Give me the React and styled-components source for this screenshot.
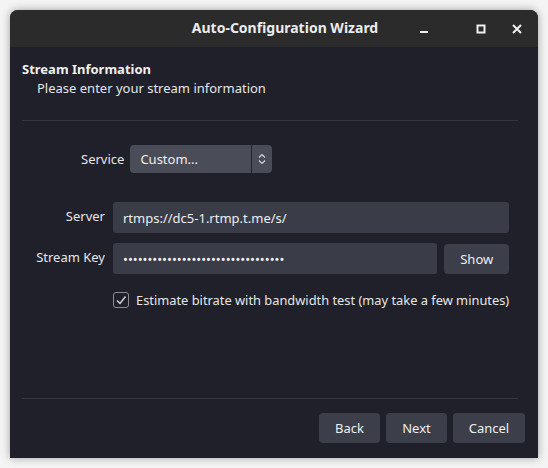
import React from "react";
import styled, { createGlobalStyle } from "styled-components";

const GlobalStyle = createGlobalStyle`
  html, body {
    margin: 0;
    padding: 0;
    background: #f4f4f4;
    font-family: "Noto Sans", "Open Sans", sans-serif;
  }
`;

const App = () => {
  return (
    <Page>
      <GlobalStyle />
      <Window>
        <TitleBar>
          <Title>Auto-Configuration Wizard</Title>
          <Controls>
            <ControlButton aria-label="minimize" $gap={45}>
              <svg width="12" height="12" viewBox="0 0 12 12">
                <rect x="2" y="8" width="8" height="2" fill="#f0f0f0" />
              </svg>
            </ControlButton>
            <ControlButton aria-label="maximize" $gap={24}>
              <svg width="12" height="12" viewBox="0 0 12 12">
                <rect x="2.5" y="2.5" width="7" height="7" fill="none" stroke="#f0f0f0" strokeWidth="2" />
              </svg>
            </ControlButton>
            <ControlButton aria-label="close" $gap={0}>
              <svg width="12" height="12" viewBox="0 0 12 12">
                <path d="M2 2 L10 10 M10 2 L2 10" stroke="#f0f0f0" strokeWidth="2" />
              </svg>
            </ControlButton>
          </Controls>
        </TitleBar>

        <Body>
          <Header>
            <HeaderTitle>Stream Information</HeaderTitle>
            <HeaderSub>Please enter your stream information</HeaderSub>
          </Header>
          <Separator />

          <ServiceRow>
            <Label>Service</Label>
            <Combo>
              <ComboText>Custom...</ComboText>
              <ComboArrow>
                <svg width="8" height="12" viewBox="0 0 8 12">
                  <path d="M1 4.5 L4 1.5 L7 4.5 M1 7.5 L4 10.5 L7 7.5" fill="none" stroke="#d8d8d8" strokeWidth="1.1" />
                </svg>
              </ComboArrow>
            </Combo>
          </ServiceRow>

          <Form>
            <FieldLabel>Server</FieldLabel>
            <Input>rtmps://dc5-1.rtmp.t.me/s/</Input>
            <FieldLabel>Stream Key</FieldLabel>
            <KeyRow>
              <Input>•••••••••••••••••••••••••••••••••</Input>
              <Button $w={65}>Show</Button>
            </KeyRow>
            <span />
            <CheckRow>
              <CheckBox>
                <svg width="12" height="12" viewBox="0 0 12 12">
                  <path d="M2 6.5 L5 9.5 L10.5 2.5" fill="none" stroke="#d8d8d8" strokeWidth="1.4" />
                </svg>
              </CheckBox>
              <CheckText>Estimate bitrate with bandwidth test (may take a few minutes)</CheckText>
            </CheckRow>
          </Form>

          <Spacer />
          <Separator />
          <Footer>
            <Button $w={61}>Back</Button>
            <Button $w={61}>Next</Button>
            <Button $w={72}>Cancel</Button>
          </Footer>
        </Body>
      </Window>
    </Page>
  );
};

const Page = styled.div`
  width: 548px;
  height: 468px;
  padding: 10px;
  box-sizing: border-box;
`;

const Window = styled.div`
  width: 528px;
  height: 448px;
  border-radius: 8px 8px 0 0;
  overflow: hidden;
  display: flex;
  flex-direction: column;
  box-shadow: 0 0 8px rgba(0, 0, 0, 0.35);
  background: #1f2029;
`;

const TitleBar = styled.div`
  height: 37px;
  background: #2b2b2b;
  display: flex;
  align-items: center;
  justify-content: center;
  position: relative;
  flex-shrink: 0;
`;

const Title = styled.div`
  color: #ececec;
  font-weight: 700;
  font-size: 14px;
  margin-left: 22px;
  margin-top: -2px;
`;

const Controls = styled.div`
  position: absolute;
  right: 15px;
  top: 13px;
  display: flex;
`;

const ControlButton = styled.div`
  width: 12px;
  height: 12px;
  display: flex;
  margin-right: ${(p) => p.$gap}px;
`;

const Body = styled.div`
  flex: 1;
  display: flex;
  flex-direction: column;
  padding: 0 12px;
`;

const Header = styled.div`
  padding: 13px 0 23px 0;
  display: flex;
  flex-direction: column;
  gap: 1px;
`;

const HeaderTitle = styled.div`
  color: #f0f0f0;
  font-weight: 700;
  font-size: 13px;
`;

const HeaderSub = styled.div`
  color: #e6e6e6;
  font-size: 13px;
  padding-left: 15px;
`;

const Separator = styled.div`
  height: 1px;
  background: #343642;
  margin-right: 8px;
`;

const ServiceRow = styled.div`
  display: flex;
  align-items: center;
  gap: 6px;
  margin-top: 24px;
  padding-left: 59px;
`;

const Label = styled.div`
  color: #e6e6e6;
  font-size: 13px;
`;

const Combo = styled.div`
  width: 142px;
  height: 28px;
  background: #4a4d58;
  border-radius: 4px;
  display: flex;
  align-items: center;
`;

const ComboText = styled.div`
  flex: 1;
  color: #eeeeee;
  font-size: 13px;
  padding-left: 10px;
`;

const ComboArrow = styled.div`
  width: 20px;
  height: 100%;
  border-left: 1px solid #23252d;
  display: flex;
  align-items: center;
  justify-content: center;
`;

const Form = styled.div`
  display: grid;
  grid-template-columns: 83px 1fr;
  column-gap: 8px;
  row-gap: 10px;
  align-items: center;
  margin-top: 29px;
  padding-right: 20px;
`;

const FieldLabel = styled.div`
  color: #e6e6e6;
  font-size: 13px;
  text-align: right;
  margin-top: -3px;
`;

const KeyRow = styled.div`
  display: flex;
  gap: 7px;
  align-items: center;
`;

const Input = styled.div`
  flex: 1;
  height: 31px;
  background: #3a3c48;
  border-radius: 3px;
  color: #eeeeee;
  font-size: 13px;
  display: flex;
  align-items: center;
  padding-left: 10px;
  white-space: nowrap;
  overflow: hidden;
`;

const Button = styled.div`
  width: ${(p) => p.$w}px;
  height: 30px;
  background: #3c3e4a;
  border-radius: 4px;
  color: #eeeeee;
  font-size: 13px;
  display: flex;
  align-items: center;
  justify-content: center;
  flex-shrink: 0;
`;

const CheckRow = styled.div`
  display: flex;
  align-items: center;
  gap: 7px;
  margin-top: 7px;
`;

const CheckBox = styled.div`
  width: 14px;
  height: 14px;
  border: 1px solid #8a8c94;
  border-radius: 3px;
  display: flex;
  align-items: center;
  justify-content: center;
`;

const CheckText = styled.div`
  color: #e6e6e6;
  font-size: 12.85px;
  white-space: nowrap;
`;

const Spacer = styled.div`
  flex: 1;
`;

const Footer = styled.div`
  display: flex;
  justify-content: flex-end;
  gap: 6px;
  padding: 14px 1px 15px 0;
`;

export default App;
